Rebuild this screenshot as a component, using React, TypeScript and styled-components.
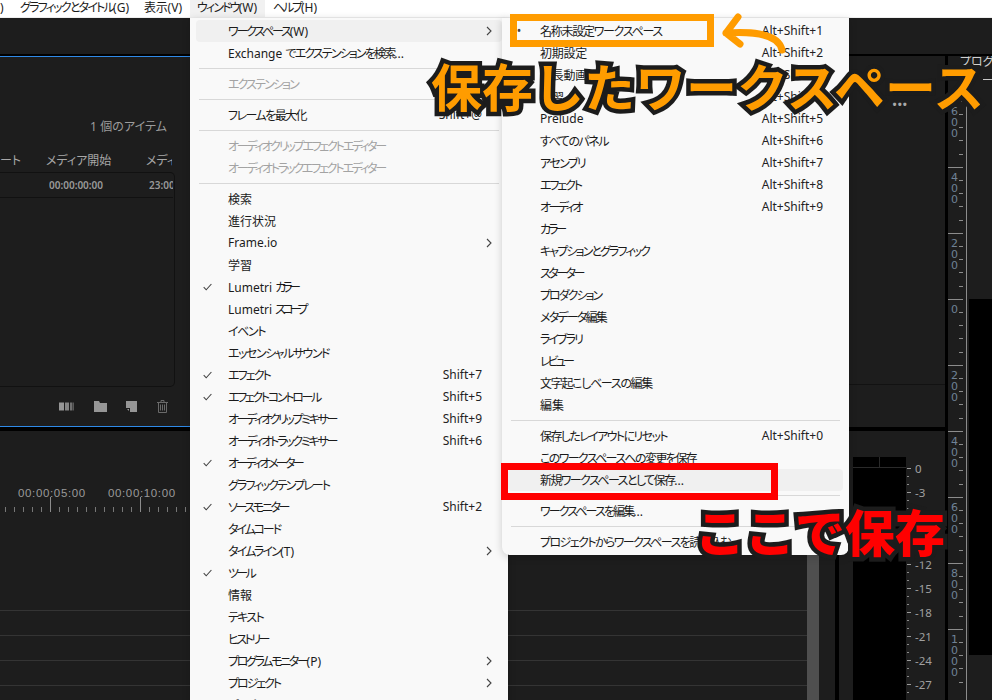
import React, { useLayoutEffect, useRef } from "react";
import styled, { createGlobalStyle } from "styled-components";

const GlobalStyle = createGlobalStyle`
    html, body {
        margin: 0;
        padding: 0;
        background: #000;
    }
    * {
        box-sizing: border-box;
    }
`;

const uiFont = `"Noto Sans", "Noto Sans CJK JP", sans-serif`;

const Page = styled.div`
    position: relative;
    width: 992px;
    height: 700px;
    overflow: hidden;
    display: flex;
    flex-direction: column;
    background: #000;
    font-family: ${uiFont};
    font-feature-settings: "palt";
`;

/* ---------- menu bar ---------- */

const MenuBar = styled.div`
    height: 18px;
    flex: none;
    display: flex;
    background: #fff;
    border-bottom: 1px solid #eee;
    font-size: 12px;
    line-height: 16px;
    color: #1b1b1b;
`;

const BarItem = styled.div<{ $open?: boolean; $width: number; $pad: number }>`
    width: ${p => p.$width}px;
    flex: none;
    padding-left: ${p => p.$pad}px;
    white-space: nowrap;
    background: ${p => (p.$open ? "#f1f1f1" : "transparent")};
`;

/* ---------- panels behind the menus ---------- */

const TopStrip = styled.div`
    height: 36px;
    flex: none;
    background: #1d1d1d;
`;

const Workspace = styled.div`
    flex: 1;
    min-height: 0;
    margin-top: 2px;
    display: flex;
    gap: 3px;
`;

const MainColumn = styled.div`
    width: 945px;
    flex: none;
    display: flex;
    flex-direction: column;
    gap: 4px;
`;

const UpperRow = styled.div`
    height: 371px;
    flex: none;
    display: flex;
`;

const ProjectPane = styled.div`
    width: 500px;
    flex: none;
    background: #1d1d1d;
    border-top: 1px solid #2f8ae8;
    border-bottom: 1px solid #2f8ae8;
    padding-top: 62px;
    color: #9c9c9c;
    font-size: 12px;
`;

const ItemCount = styled.div`
    width: 167px;
    height: 16px;
    line-height: 16px;
    text-align: right;
    letter-spacing: 0.1px;
`;

const ColumnRow = styled.div`
    width: 172px;
    height: 17px;
    margin-top: 17px;
    display: grid;
    grid-template-columns: 46px 100px 26px;
    line-height: 17px;
    color: #a8a8a8;
    white-space: nowrap;
`;

const Cell = styled.div`
    overflow: hidden;
`;

const ListBox = styled.div`
    width: 175px;
    height: 215px;
    margin-top: 3px;
    border: 1px solid #111;
    border-left: 0;
    border-radius: 0 5px 5px 0;
`;

const ListRow = styled.div`
    width: 173px;
    height: 25px;
    display: grid;
    grid-template-columns: 49px 100px 24px;
    align-items: center;
    border-bottom: 1px solid #111;
    font-size: 10px;
    font-weight: 600;
    color: #999;
    white-space: nowrap;
`;

const PaneTools = styled.div`
    width: 168px;
    margin-top: 13px;
    display: flex;
    align-items: center;
    justify-content: flex-end;
    gap: 19.7px;
    color: #969696;
`;

const DimIcon = styled.svg`
    color: #6a6a6a;
`;

const MidPane = styled.div`
    flex: 1;
    background: #1d1d1d;
    display: flex;
    flex-direction: column;
`;

const Dots = styled.div`
    margin: 41px 37px 0 auto;
    height: 14px;
    line-height: 14px;
    font-size: 11px;
    letter-spacing: 1px;
    font-weight: 700;
    color: #aaa;
`;

const MidFooter = styled.div`
    margin-top: auto;
    height: 43px;
    border-top: 1px solid #121212;
`;

const LowerRow = styled.div`
    flex: 1;
    min-height: 0;
    display: flex;
    overflow: hidden;
    background: #1d1d1d;
`;

const TimelineArea = styled.div`
    width: 807px;
    flex: none;
`;

const TimeLabels = styled.div`
    margin-top: 55px;
    height: 11px;
    display: flex;
    padding-left: 18px;
    gap: 22px;
    font-family: "Liberation Sans", sans-serif;
    font-size: 11.5px;
    line-height: 14px;
    letter-spacing: 0.65px;
    color: #9a9a9a;
`;

const TickRuler = styled.div`
    height: 15px;
    background-repeat: repeat-x;
    background-size: 90px 15px, 9px 5px;
    background-image:
        linear-gradient(to right, transparent 50px, #8c8c8c 50px, #8c8c8c 51px, transparent 51px),
        linear-gradient(to right, transparent 5px, #777 5px, #777 6px, transparent 6px);
    background-position: 0 0, 0 10px;
`;

const TrackSpacer = styled.div`
    height: 98px;
`;

const TrackLine = styled.div`
    height: 25px;
    border-top: 1px solid #343434;
`;

const ScrollBar = styled.div`
    width: 12px;
    flex: none;
    background: #4f4f4f;
`;

const Gutter = styled.div`
    width: 16px;
    flex: none;
`;

const BlackBar = styled.div`
    width: 4px;
    flex: none;
    background: #000;
`;

const MeterPanel = styled.div`
    flex: 1;
    display: flex;
    padding-left: 14px;
    padding-top: 26px;
`;

const Meter = styled.div`
    width: 53px;
    flex: none;
    display: flex;
    flex-direction: column;
    background: #000;
`;

const MeterHead = styled.div`
    height: 11px;
    flex: none;
    display: flex;
    border-bottom: 1px solid #2a2a2a;
    justify-content: center;
`;

const MeterSplit = styled.div`
    width: 1px;
    background: #2a2a2a;
`;

const MeterScale = styled.div`
    flex: 1;
`;

const ScaleRow = styled.div`
    position: relative;
    height: 24px;
    padding-left: 9px;
    font-size: 11.5px;
    line-height: 24px;
    color: #a0a0a0;
    &::before {
        content: "";
        position: absolute;
        left: 1px;
        top: 11px;
        width: 4px;
        height: 1px;
        background: #9a9a9a;
    }
    &::after {
        content: "";
        position: absolute;
        left: 1px;
        top: 19px;
        width: 2px;
        height: 9px;
        background: linear-gradient(#8a8a8a 0 1px, transparent 1px 8px, #8a8a8a 8px 9px);
    }
`;

/* ---------- far right column ---------- */

const RightColumn = styled.div`
    width: 44px;
    flex: none;
    display: flex;
    flex-direction: column;
    background: #1d1d1d;
    overflow: hidden;
`;

const MonitorTab = styled.div`
    height: 24px;
    flex: none;
    padding-left: 12px;
    white-space: nowrap;
    font-size: 12px;
    line-height: 12px;
    color: #d0d0d0;
`;

const TabLine = styled.div`
    width: 9px;
    height: 1px;
    margin: -1px 0 21px auto;
    background: #c8c8c8;
    flex: none;
`;

const RightBody = styled.div`
    flex: 1;
    display: flex;
`;

const Ruler = styled.div`
    width: 19px;
    flex: none;
    border-right: 1px solid #8c8c8c;
`;

const RulerStep = styled.div`
    position: relative;
    height: 66px;
    border-top: 1px solid #8c8c8c;
    padding: 3px 3px 0 0;
    writing-mode: vertical-rl;
    text-orientation: upright;
    font-family: "DejaVu Sans", sans-serif;
    font-size: 11px;
    line-height: 12px;
    letter-spacing: -2px;
    color: #6f8296;
    &::after {
        content: "";
        position: absolute;
        right: 0;
        top: 12px;
        width: 4px;
        height: 53px;
        background: repeating-linear-gradient(to bottom, #8c8c8c 0 1px, transparent 1px 13.2px);
    }
`;

const Viewer = styled.div`
    flex: 1;
    margin-left: 2px;
    display: flex;
    flex-direction: column;
`;

const ViewerEmpty = styled.div`
    height: 198px;
    flex: none;
`;

const ViewerBlack = styled.div`
    height: 356px;
    flex: none;
    background: #000;
`;

/* ---------- menus ---------- */

const Menu = styled.div<{ $left: number; $width: number; $height: number; $round?: boolean }>`
    position: absolute;
    left: ${p => p.$left}px;
    top: 18px;
    width: ${p => p.$width}px;
    height: ${p => p.$height}px;
    padding: 2px 6px;
    background: #f9f9f9;
    color: #1b1b1b;
    font-size: 12px;
    border-radius: ${p => (p.$round ? "0 0 8px 8px" : "0")};
    box-shadow: 0 2px 8px rgba(0, 0, 0, 0.18);
`;

const Row = styled.div<{ $active?: boolean; $disabled?: boolean }>`
    height: 22px;
    padding-bottom: 1px;
    display: grid;
    grid-template-columns: 32px 1fr auto 20px;
    align-items: center;
    border-radius: 4px;
    white-space: nowrap;
    background: ${p => (p.$active ? "#f0f0f0" : "transparent")};
    color: ${p => (p.$disabled ? "#a3a3a3" : "#1b1b1b")};
`;

const Mark = styled.span`
    display: flex;
    justify-content: center;
    width: 22px;
    color: #444;
`;

const Fit = styled.span`
    display: inline-block;
    justify-self: start;
`;

const Plain = styled.span`
    letter-spacing: 0;
`;

const Key = styled.span`
    color: #222;
`;

const Chevron = styled.span`
    display: flex;
    justify-content: flex-end;
    padding-right: 10px;
    color: #444;
`;

const Sep = styled.div`
    height: 9px;
    padding: 4px 3px;
    &::before {
        content: "";
        display: block;
        height: 1px;
        background: #d8d8d8;
    }
`;

/* ---------- annotations on top ---------- */

const Frame = styled.div<{ $color: string; $left: number; $top: number; $width: number; $height: number }>`
    position: absolute;
    left: ${p => p.$left}px;
    top: ${p => p.$top}px;
    width: ${p => p.$width}px;
    height: ${p => p.$height}px;
    border: 7px solid ${p => p.$color};
`;

const Callout = styled.div<{ $color: string; $left: number; $top: number; $size: number; $weight: number }>`
    position: absolute;
    left: ${p => p.$left}px;
    top: ${p => p.$top}px;
    font-family: "Noto Sans CJK JP", sans-serif;
    font-size: ${p => p.$size}px;
    line-height: 1;
    font-weight: ${p => p.$weight};
    white-space: nowrap;
    font-feature-settings: normal;
    color: ${p => p.$color};
    -webkit-text-stroke: 9px #1c1c1c;
    paint-order: stroke fill;
`;

const ArrowMark = styled.svg`
    position: absolute;
    left: 720px;
    top: 12px;
`;

const latinRun = /([A-Za-z0-9().+@. ]+)/;

// the reference font has much narrower kana, so the kana of each label is tracked to its width
function FitLabel({ width, text }: { width: number; text: string }) {
    const ref = useRef<HTMLSpanElement>(null);
    const parts = text.split(latinRun).filter(Boolean);
    const tracked = parts.filter(p => !latinRun.test(p)).join("").length;
    useLayoutEffect(() => {
        const el = ref.current;
        if (!el || !tracked) return;
        el.style.letterSpacing = "0px";
        const natural = el.getBoundingClientRect().width;
        el.style.letterSpacing = `${(width - natural) / tracked}px`;
    }, [width, tracked]);
    return (
        <Fit ref={ref}>
            {parts.map((p, i) => (latinRun.test(p) ? <Plain key={i}>{p}</Plain> : p))}
        </Fit>
    );
}

type Item =
    | "sep"
    | {
          label: string;
          w: number;
          keys?: string;
          mark?: "check" | "dot";
          more?: boolean;
          active?: boolean;
          disabled?: boolean;
      };

const windowMenu: Item[] = [
    { label: "ワークスペース(W)", w: 80, more: true, active: true },
    { label: "Exchange でエクステンションを検索...", w: 176 },
    "sep",
    { label: "エクステンション", w: 70, disabled: true },
    "sep",
    { label: "フレームを最大化", w: 78, keys: "Shift+@" },
    "sep",
    { label: "オーディオクリップエフェクトエディター", w: 157, disabled: true },
    { label: "オーディオトラックエフェクトエディター", w: 157, disabled: true },
    "sep",
    { label: "検索", w: 24 },
    { label: "進行状況", w: 48 },
    { label: "Frame.io", w: 44, more: true },
    { label: "学習", w: 24 },
    { label: "Lumetri カラー", w: 69, mark: "check" },
    { label: "Lumetri スコープ", w: 77 },
    { label: "イベント", w: 37 },
    { label: "エッセンシャルサウンド", w: 101 },
    { label: "エフェクト", w: 42, mark: "check", keys: "Shift+7" },
    { label: "エフェクトコントロール", w: 92, mark: "check", keys: "Shift+5" },
    { label: "オーディオクリップミキサー", w: 108, keys: "Shift+9" },
    { label: "オーディオトラックミキサー", w: 108, keys: "Shift+6" },
    { label: "オーディオメーター", w: 74, mark: "check" },
    { label: "グラフィックテンプレート", w: 101 },
    { label: "ソースモニター", w: 60, mark: "check", keys: "Shift+2" },
    { label: "タイムコード", w: 52 },
    { label: "タイムライン(T)", w: 66, more: true },
    { label: "ツール", w: 26, mark: "check" },
    { label: "情報", w: 24 },
    { label: "テキスト", w: 35 },
    { label: "ヒストリー", w: 40 },
    { label: "プログラムモニター(P)", w: 93, more: true },
    { label: "プロジェクト", w: 52, more: true },
    { label: "プロパティ", w: 40 },
];

const workspaceMenu: Item[] = [
    { label: "名称未設定ワークスペース", w: 122, mark: "dot", keys: "Alt+Shift+1" },
    { label: "初期設定", w: 47, keys: "Alt+Shift+2" },
    { label: "縦長動画", w: 47, keys: "Alt+Shift+3" },
    { label: "学習", w: 24, keys: "Alt+Shift+4" },
    { label: "Prelude", w: 39, keys: "Alt+Shift+5" },
    { label: "すべてのパネル", w: 68, keys: "Alt+Shift+6" },
    { label: "アセンブリ", w: 45, keys: "Alt+Shift+7" },
    { label: "エフェクト", w: 41, keys: "Alt+Shift+8" },
    { label: "オーディオ", w: 41, keys: "Alt+Shift+9" },
    { label: "カラー", w: 24 },
    { label: "キャプションとグラフィック", w: 109 },
    { label: "スターター", w: 43 },
    { label: "プロダクション", w: 61 },
    { label: "メタデータ編集", w: 66 },
    { label: "ライブラリ", w: 42 },
    { label: "レビュー", w: 32 },
    { label: "文字起こしベースの編集", w: 112 },
    { label: "編集", w: 24 },
    "sep",
    { label: "保存したレイアウトにリセット", w: 127, keys: "Alt+Shift+0" },
    { label: "このワークスペースへの変更を保存", w: 156 },
    { label: "新規ワークスペースとして保存...", w: 144, active: true },
    "sep",
    { label: "ワークスペースを編集...", w: 103 },
    "sep",
    { label: "プロジェクトからワークスペースを読み込む", w: 190 },
];

const barItems = [
    { label: ")", w: 4, width: 20, pad: 0 },
    { label: "グラフィックとタイトル(G)", w: 109, width: 124, pad: 0 },
    { label: "表示(V)", w: 38, width: 46, pad: 0 },
    { label: "ウィンドウ(W)", w: 60, width: 75, pad: 7, open: true },
    { label: "ヘルプ(H)", w: 44, width: 60, pad: 8 },
];

const scaleLabels = ["0", "-3", "-6", "-9", "-12", "-15", "-18", "-21", "-24", "-27"];
const rulerLabels = ["600", "400", "200", "0", "200", "400", "600", "800", "1000"];

function CheckIcon() {
    return (
        <svg width="9" height="8" viewBox="0 0 9 8">
            <path d="M.7 4.2 3.2 6.8 8.4 1" fill="none" stroke="currentColor" strokeWidth="1.1" />
        </svg>
    );
}

function ChevronIcon() {
    return (
        <svg width="6" height="10" viewBox="0 0 6 10">
            <path d="M1 1 5 5 1 9" fill="none" stroke="currentColor" strokeWidth="1.1" />
        </svg>
    );
}

function MenuRows({ items }: { items: Item[] }) {
    return (
        <>
            {items.map((item, i) =>
                item === "sep" ? (
                    <Sep key={i} />
                ) : (
                    <Row key={i} $active={item.active} $disabled={item.disabled}>
                        <Mark>
                            {item.mark === "check" && <CheckIcon />}
                            {item.mark === "dot" && "•"}
                        </Mark>
                        <FitLabel width={item.w} text={item.label} />
                        <Key>{item.keys}</Key>
                        <Chevron>{item.more && <ChevronIcon />}</Chevron>
                    </Row>
                )
            )}
        </>
    );
}

export default function App() {
    return (
        <>
            <GlobalStyle />
            <Page>
                <MenuBar>
                    {barItems.map(item => (
                        <BarItem key={item.label} $width={item.width} $pad={item.pad} $open={item.open}>
                            <FitLabel width={item.w} text={item.label} />
                        </BarItem>
                    ))}
                </MenuBar>
                <TopStrip />
                <Workspace>
                    <MainColumn>
                        <UpperRow>
                            <ProjectPane>
                                <ItemCount>1 個のアイテム</ItemCount>
                                <ColumnRow>
                                    <Cell>ート</Cell>
                                    <Cell>メディア開始</Cell>
                                    <Cell>メディ</Cell>
                                </ColumnRow>
                                <ListBox>
                                    <ListRow>
                                        <Cell />
                                        <Cell>00:00:00:00</Cell>
                                        <Cell>23:00</Cell>
                                    </ListRow>
                                </ListBox>
                                <PaneTools>
                                    <svg width="15" height="9" viewBox="0 0 15 9" fill="currentColor">
                                        <rect width="5" height="8" y="0.5" />
                                        <rect x="6" width="4" height="8" y="0.5" opacity="0.85" />
                                        <rect x="11" width="2.5" height="8" y="0.5" opacity="0.7" />
                                        <rect x="14" width="1" height="8" y="0.5" opacity="0.5" />
                                    </svg>
                                    <svg width="13" height="11" viewBox="0 0 13 11" fill="currentColor">
                                        <path d="M0 0h5l1 2h7v9H0z" />
                                    </svg>
                                    <svg width="11" height="11" viewBox="0 0 11 11" fill="currentColor">
                                        <path d="M0 0h11v11H4V7H0z" />
                                        <path d="M1 8h2v2z" />
                                    </svg>
                                    <DimIcon width="11" height="13" viewBox="0 0 11 13" fill="none" stroke="currentColor">
                                        <path d="M0 2.5h11M4 2.5V.5h3v2M1.5 2.5v10h8v-10M3.5 4.5v6M5.5 4.5v6M7.5 4.5v6" />
                                    </DimIcon>
                                </PaneTools>
                            </ProjectPane>
                            <MidPane>
                                <Dots>•••</Dots>
                                <MidFooter />
                            </MidPane>
                        </UpperRow>
                        <LowerRow>
                            <TimelineArea>
                                <TimeLabels>
                                    <span>00:00:05:00</span>
                                    <span>00:00:10:00</span>
                                </TimeLabels>
                                <TickRuler />
                                <TrackSpacer />
                                <TrackLine />
                                <TrackLine />
                                <TrackLine />
                                <TrackLine />
                            </TimelineArea>
                            <ScrollBar />
                            <Gutter />
                            <BlackBar />
                            <MeterPanel>
                                <Meter>
                                    <MeterHead>
                                        <MeterSplit />
                                    </MeterHead>
                                </Meter>
                                <MeterScale>
                                    {scaleLabels.map(label => (
                                        <ScaleRow key={label}>{label}</ScaleRow>
                                    ))}
                                </MeterScale>
                            </MeterPanel>
                        </LowerRow>
                    </MainColumn>
                    <RightColumn>
                        <MonitorTab>プログ</MonitorTab>
                        <TabLine />
                        <RightBody>
                            <Ruler>
                                {rulerLabels.map((label, i) => (
                                    <RulerStep key={i}>{label}</RulerStep>
                                ))}
                            </Ruler>
                            <Viewer>
                                <ViewerEmpty />
                                <ViewerBlack />
                            </Viewer>
                        </RightBody>
                    </RightColumn>
                </Workspace>

                <Menu $left={190} $width={318} $height={700}>
                    <MenuRows items={windowMenu} />
                </Menu>
                <Menu $left={502} $width={347} $height={537} $round>
                    <MenuRows items={workspaceMenu} />
                </Menu>

                <Frame $color="#ff9c00" $left={510} $top={14} $width={204} $height={33} />
                <Frame $color="#ff0000" $left={501} $top={463} $width={277} $height={37} />
                <ArrowMark width="70" height="42" viewBox="0 0 70 42">
                    <path
                        d="M18 5 6 21 20 32M6 21C24 20 58 19 62 38"
                        fill="none"
                        stroke="#ff9c00"
                        strokeWidth="7"
                        strokeLinecap="round"
                        strokeLinejoin="round"
                    />
                </ArrowMark>
                <Callout $color="#ff9c00" $left={431} $top={60} $size={51} $weight={700}>
                    保存したワークスペース
                </Callout>
                <Callout $color="#ff0000" $left={695} $top={505} $size={50} $weight={900}>
                    ここで保存
                </Callout>
            </Page>
        </>
    );
}
